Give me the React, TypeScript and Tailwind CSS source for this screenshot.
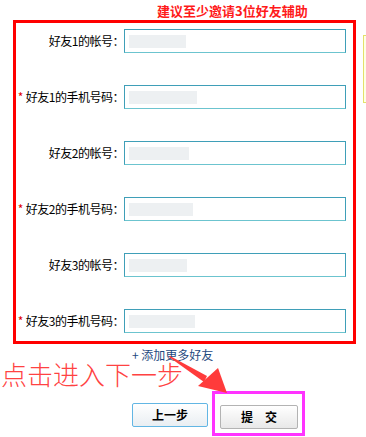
import React from "react";

const rows = [
  { label: "好友1的帐号：", required: false, fill: 57 },
  { label: "好友1的手机号码：", required: true, fill: 68 },
  { label: "好友2的帐号：", required: false, fill: 60 },
  { label: "好友2的手机号码：", required: true, fill: 64 },
  { label: "好友3的帐号：", required: false, fill: 58 },
  { label: "好友3的手机号码：", required: true, fill: 66 },
];

export default function App() {
  return (
    <div
      className="relative w-[366px] h-[437px] overflow-hidden bg-white text-black"
      style={{ fontFamily: '"Noto Sans CJK SC", "Liberation Sans", sans-serif' }}
    >
      {/* 标题 */}
      <div className="h-[20px] pl-[157px] pt-[2px] text-[13px] leading-[17px] font-bold text-[#ff1a1a] whitespace-nowrap">
        建议至少邀请3位好友辅助
      </div>

      {/* 红框表单 */}
      <div className="ml-[13px] w-[343px] border-[3px] border-[#ff0000] pt-[6px] pb-[8px] flex flex-col gap-[32px]">
        {rows.map((row) => (
          <div key={row.label} className="flex items-center h-[24px]">
            <div className="w-[108px] text-right text-[12px] leading-[14px] tracking-[-0.5px] whitespace-nowrap">
              {row.required && <span className="text-[#e00000] mr-[3px]">*</span>}
              {row.label}
            </div>
            <div className="w-[222px] h-[24px] border border-[#3f9fb8] border-b-[#6cc4cf] bg-white flex items-center pl-[4px]">
              <div
                className="h-[13px] bg-[#edf0f2]"
                style={{ width: row.fill }}
              />
            </div>
          </div>
        ))}
      </div>

      {/* 右侧提示框（被截断） */}
      <div className="absolute left-[363px] top-[35px] w-[10px] h-[68px] border border-[#e2e26a] bg-[#ffffe6]" />

      {/* 添加更多 */}
      <div className="mt-[4px] h-[13px] pl-[132px] text-[12px] leading-[13px] text-[#1f4a7e] whitespace-nowrap">
        + 添加更多好友
      </div>

      {/* 提示文字 */}
      <div className="h-[26px] pl-[1px] text-[26px] leading-[26px] font-light text-[#ff4242] whitespace-nowrap">
        点击进入下一步
      </div>

      {/* 按钮 */}
      <div className="mt-[4px] flex items-start pl-[132px]">
        <button className="mt-[12px] w-[76px] h-[24px] rounded-[2px] border border-[#62b6e4] bg-gradient-to-b from-white to-[#e9eef2] text-[12px] font-bold leading-[22px]">
          上一步
        </button>
        <div className="ml-[4px] border-[3px] border-[#ff33ff] pt-[9px] pl-[5px] pr-[4px] pb-[4px]">
          <button className="w-[78px] h-[24px] rounded-[2px] border border-[#b3b3b3] bg-gradient-to-b from-white to-[#e8e8e8] text-[12px] font-bold leading-[22px]">
            提　交
          </button>
        </div>
      </div>

      {/* 红色箭头 */}
      <svg
        className="absolute left-[160px] top-[345px]"
        width="80"
        height="55"
        viewBox="0 0 80 55"
      >
        <polygon points="10,11 47,31 44,37 9,12" fill="#ff3b3b" />
        <polygon points="38,41 58,23 67,48" fill="#ff3b3b" />
      </svg>
    </div>
  );
}
